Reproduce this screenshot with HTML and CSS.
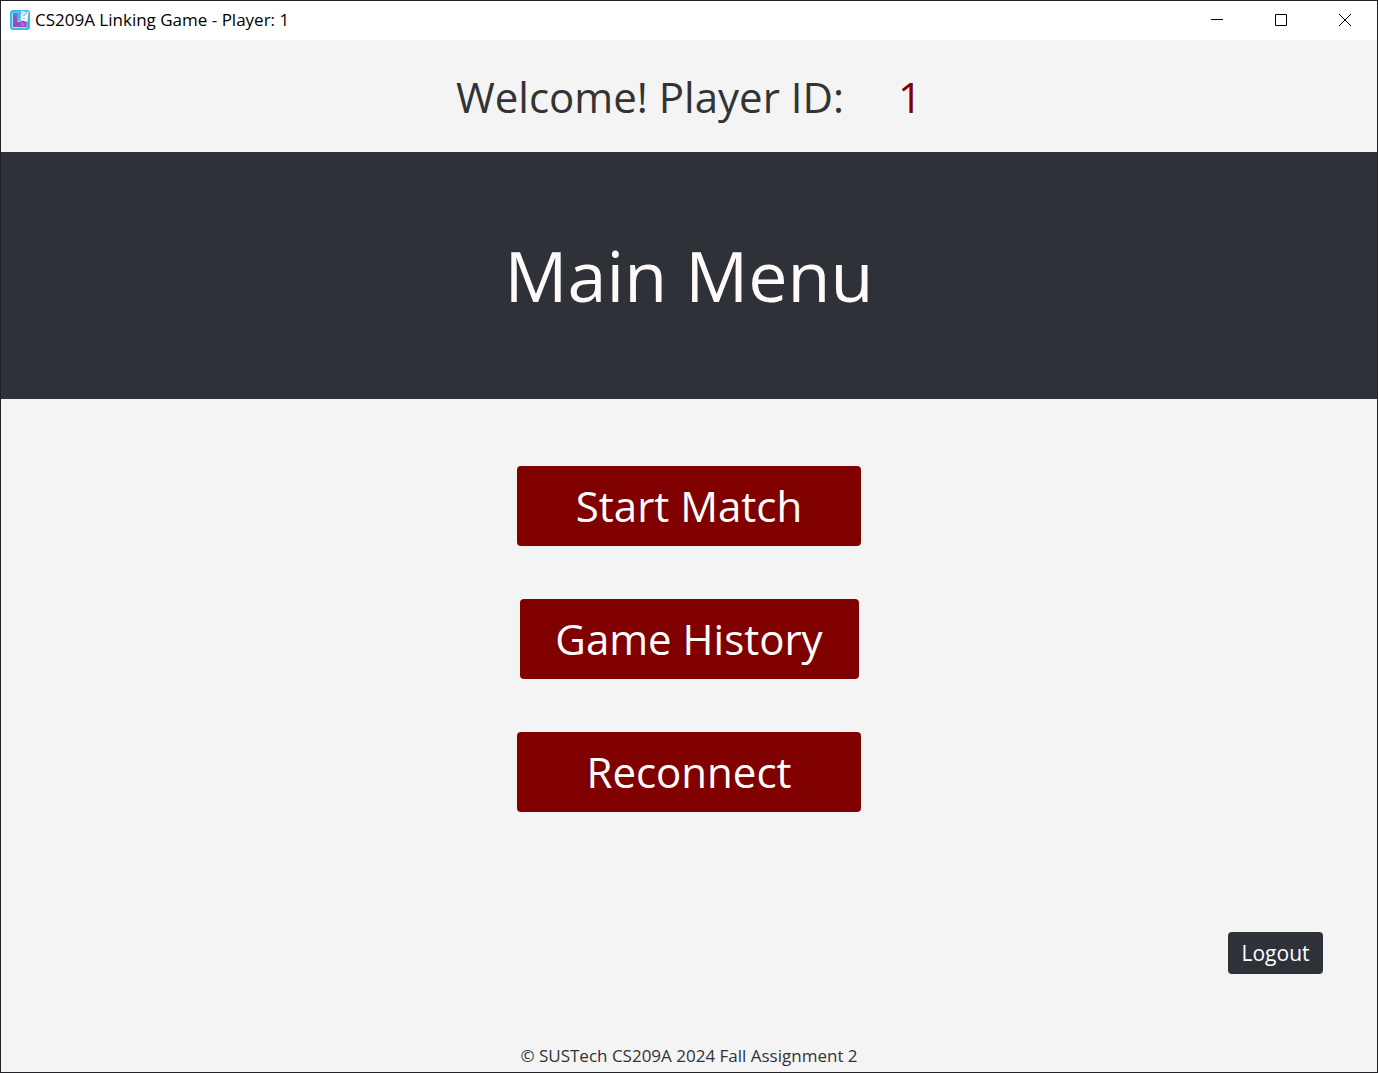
FILE: index.html
```html
<!DOCTYPE html>
<html lang="en">
<head>
<meta charset="utf-8">
<title>CS209A Linking Game - Player: 1</title>
<link rel="stylesheet" href="styles.css">
</head>
<body>
<div class="window">
  <header class="titlebar">
    <svg class="app-icon" viewBox="0 0 20 20" aria-hidden="true">
      <rect width="20" height="20" rx="3" fill="#35bdf2"/>
      <path d="M2 2.500h6V11h8.500v7H2z" fill="#a5dcf6"/>
      <path d="M3 3h4.500v9h2.500l2.500-1.500L16.500 12v5H3z" fill="#9a4db8"/>
      <path d="M3 3h4.500v4H3z" fill="#8468c8"/>
      <circle cx="12.500" cy="14.500" r="1.800" fill="#c463d6"/>
      <path d="M11 1l7.500 1-1 9.500-7-1z" fill="#f1f4f6"/>
      <path d="M12 3.500l1-.5M15.500 2l1 2M13.500 6l1.500-2M14 8v1" stroke="#7d868e" fill="none"/>
    </svg>
    <span class="window-title">CS209A Linking Game - Player: 1</span>
    <div class="window-controls">
      <button class="control" aria-label="Minimize"><svg viewBox="0 0 12 12"><path d="M0 5.500h12"/></svg></button>
      <button class="control" aria-label="Maximize"><svg viewBox="0 0 12 12"><path d="M.5.5h11v11H.5z"/></svg></button>
      <button class="control" aria-label="Close"><svg viewBox="0 0 12 12"><path d="M0 0l12 12M12 0L0 12"/></svg></button>
    </div>
  </header>
  <div class="welcome">
    <span>Welcome! Player ID:</span>
    <span class="player-id">1</span>
  </div>
  <div class="banner"><h1>Main Menu</h1></div>
  <main class="menu">
    <button class="menu-button">Start Match</button>
    <button class="menu-button menu-button-narrow">Game History</button>
    <button class="menu-button">Reconnect</button>
  </main>
  <div class="session"><button class="logout">Logout</button></div>
  <footer class="footer">© SUSTech CS209A 2024 Fall Assignment 2</footer>
</div>
</body>
</html>
```

FILE: styles.css
```css
* { box-sizing: border-box; }
body { margin: 0; font-family: "Open Sans", "Noto Sans", sans-serif; color: #333; }
button { border: 0; margin: 0; padding: 0; font-family: inherit; }
.window {
  display: flex;
  flex-direction: column;
  min-height: 100vh;
  border: 1px solid #222226;
  background: #f4f4f4;
}
.titlebar {
  display: flex;
  align-items: center;
  height: 39px;
  padding: 0 0 1px 9px;
  background: #fff;
  color: #000;
}
.app-icon { width: 20px; height: 20px; margin-right: 5px; }
.window-title { font-size: 17px; line-height: 24px; }
.window-controls { display: flex; align-self: stretch; margin-left: auto; }
.control {
  display: flex;
  align-items: center;
  justify-content: center;
  width: 64px;
  background: transparent;
}
.control svg { width: 12px; height: 12px; fill: none; stroke: #000; stroke-width: 1px; }
.welcome {
  display: flex;
  align-items: center;
  justify-content: center;
  gap: 54px;
  height: 112px;
  padding-top: 2px;
  font-size: 42px;
  line-height: 56px;
}
.player-id { color: #800000; }
.banner {
  display: flex;
  align-items: center;
  justify-content: center;
  height: 247px;
  padding-bottom: 2px;
  background: #2e3138;
  color: #fffafa;
}
.banner h1 { margin: 0; font-size: 70px; font-weight: 400; line-height: 96px; }
.menu {
  display: flex;
  flex-direction: column;
  align-items: center;
  gap: 53px;
  padding-top: 67px;
}
.menu-button {
  width: 344px;
  height: 80px;
  border-radius: 4px;
  background: #800000;
  color: #fff;
  font-size: 42px;
  line-height: 56px;
}
.menu-button-narrow { width: 339px; }
.session {
  display: flex;
  justify-content: flex-end;
  margin-top: auto;
  padding-right: 54px;
}
.logout {
  width: 95px;
  height: 42px;
  border-radius: 4px;
  background: #2e3138;
  color: #fff;
  font-size: 21px;
  line-height: 28px;
}
.footer {
  padding: 70px 0 4px;
  font-size: 17px;
  line-height: 24px;
  text-align: center;
}
```
